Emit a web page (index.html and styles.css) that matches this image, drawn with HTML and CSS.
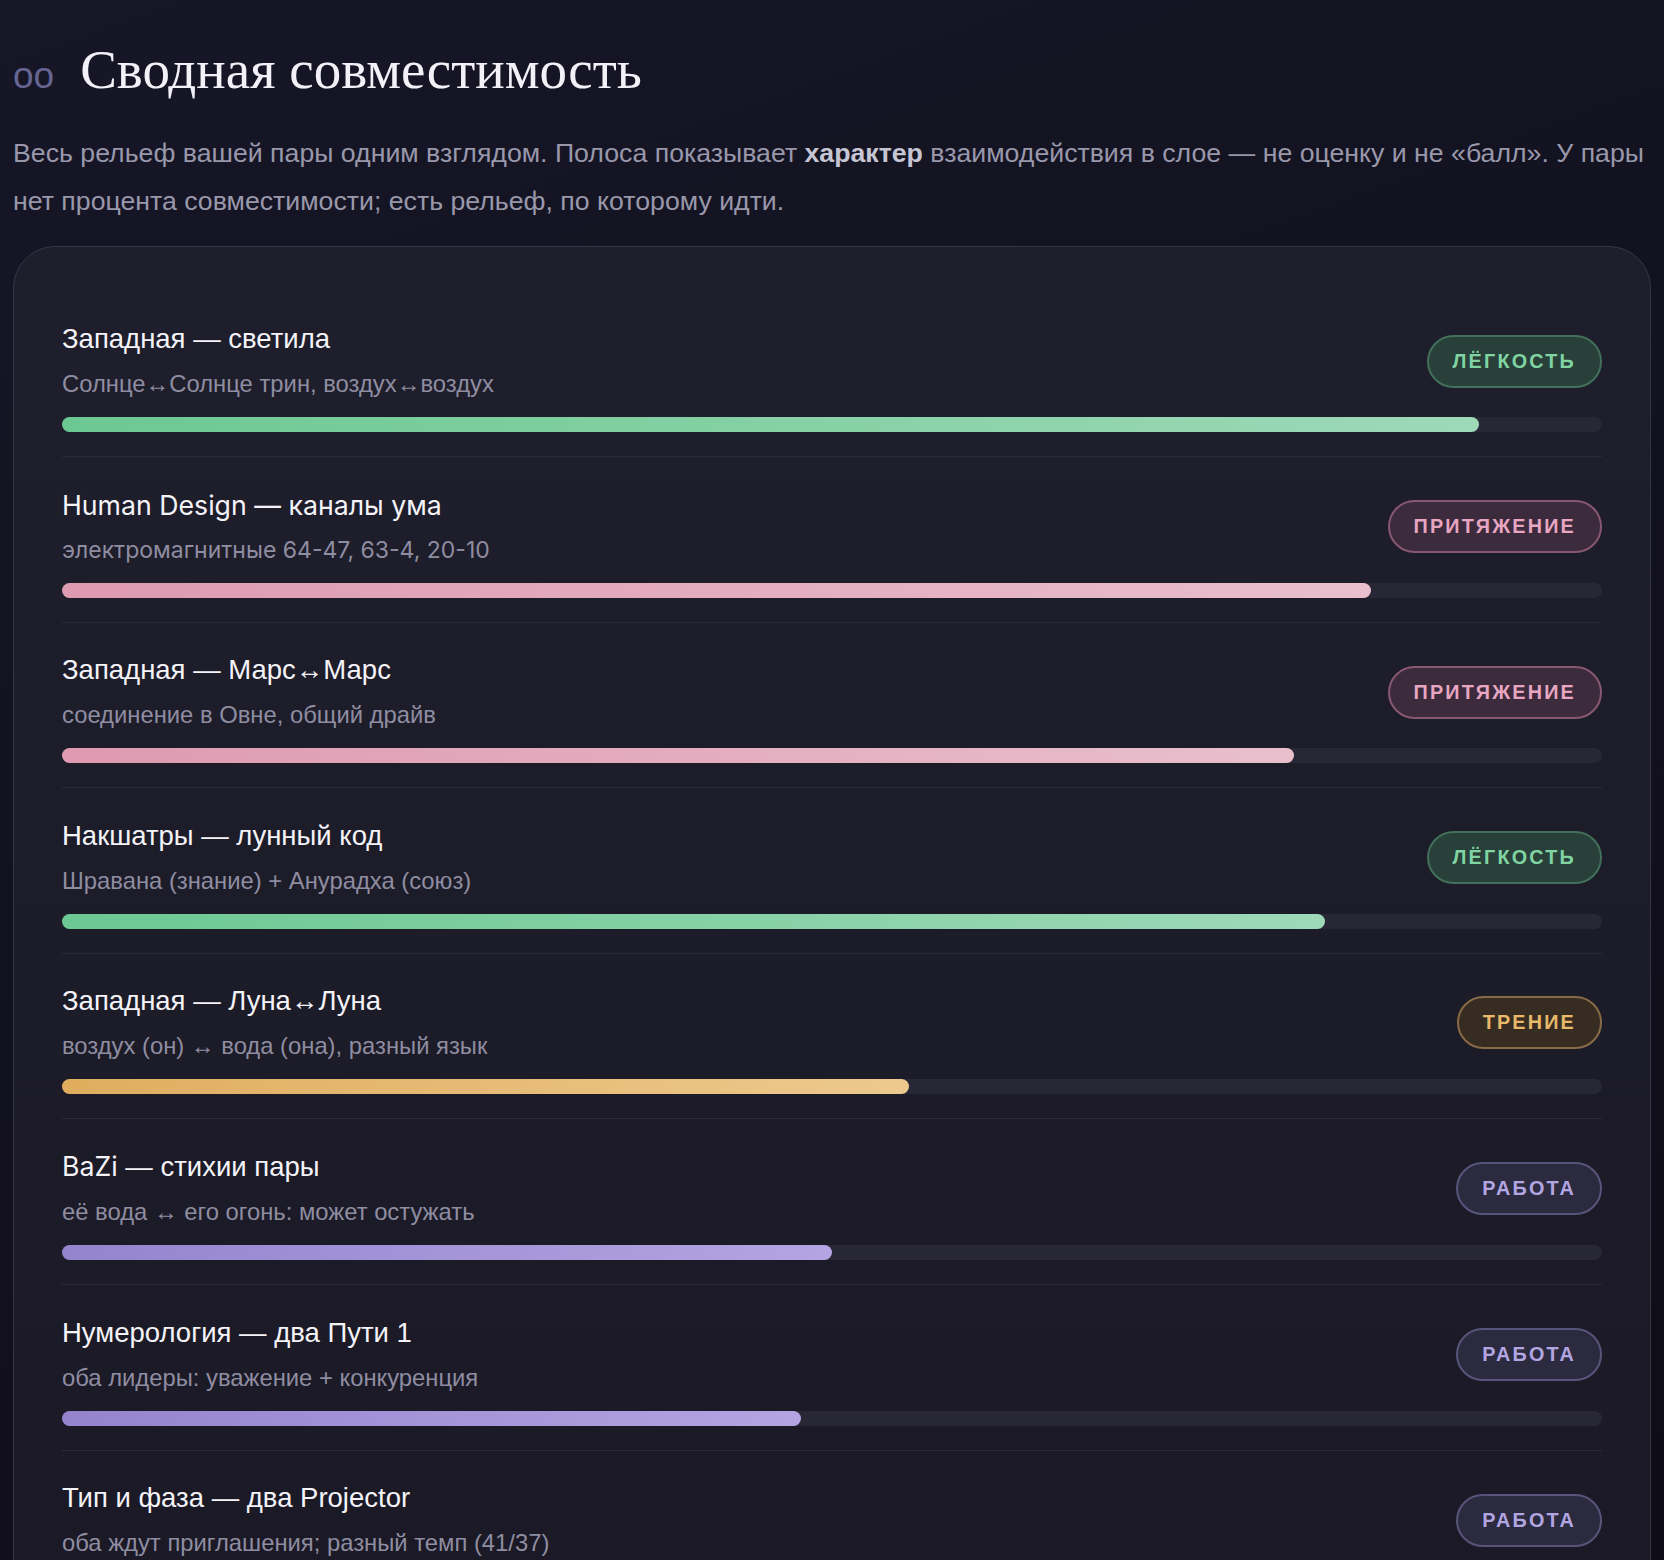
FILE: index.html
```html
<!DOCTYPE html>
<html lang="ru">
<head>
    <meta charset="UTF-8">
    <meta name="viewport" content="width=device-width, initial-scale=1.0">
    <title>Сводная совместимость</title>
    <link rel="stylesheet" href="styles.css">
</head>
<body>
    <div class="page">
        <h1 class="section-title"><span class="section-mark">oo</span>Сводная совместимость</h1>
        <p class="lead">Весь рельеф вашей пары одним взглядом. Полоса показывает <b>характер</b> взаимодействия в слое — не оценку и не «балл». У пары нет процента совместимости; есть рельеф, по которому идти.</p>

        <div class="card">
            <div class="layer">
                <div class="layer-head">
                    <div class="layer-text">
                        <div class="layer-name">Западная — светила</div>
                        <div class="layer-note">Солнце↔Солнце трин, воздух↔воздух</div>
                    </div>
                    <span class="tag tag-ease">Лёгкость</span>
                </div>
                <div class="track"><div class="fill fill-ease" style="width: 92%"></div></div>
            </div>

            <div class="layer layer-alt">
                <div class="layer-head">
                    <div class="layer-text">
                        <div class="layer-name">Human Design — каналы ума</div>
                        <div class="layer-note">электромагнитные 64-47, 63-4, 20-10</div>
                    </div>
                    <span class="tag tag-pull">Притяжение</span>
                </div>
                <div class="track"><div class="fill fill-pull" style="width: 85%"></div></div>
            </div>

            <div class="layer">
                <div class="layer-head">
                    <div class="layer-text">
                        <div class="layer-name">Западная — Марс↔Марс</div>
                        <div class="layer-note">соединение в Овне, общий драйв</div>
                    </div>
                    <span class="tag tag-pull">Притяжение</span>
                </div>
                <div class="track"><div class="fill fill-pull" style="width: 80%"></div></div>
            </div>

            <div class="layer">
                <div class="layer-head">
                    <div class="layer-text">
                        <div class="layer-name">Накшатры — лунный код</div>
                        <div class="layer-note">Шравана (знание) + Анурадха (союз)</div>
                    </div>
                    <span class="tag tag-ease">Лёгкость</span>
                </div>
                <div class="track"><div class="fill fill-ease" style="width: 82%"></div></div>
            </div>

            <div class="layer">
                <div class="layer-head">
                    <div class="layer-text">
                        <div class="layer-name">Западная — Луна↔Луна</div>
                        <div class="layer-note">воздух (он) ↔ вода (она), разный язык</div>
                    </div>
                    <span class="tag tag-friction">Трение</span>
                </div>
                <div class="track"><div class="fill fill-friction" style="width: 55%"></div></div>
            </div>

            <div class="layer">
                <div class="layer-head">
                    <div class="layer-text">
                        <div class="layer-name"><span class="latin">BaZi</span> — стихии пары</div>
                        <div class="layer-note">её вода ↔ его огонь: может остужать</div>
                    </div>
                    <span class="tag tag-work">Работа</span>
                </div>
                <div class="track"><div class="fill fill-work" style="width: 50%"></div></div>
            </div>

            <div class="layer">
                <div class="layer-head">
                    <div class="layer-text">
                        <div class="layer-name">Нумерология — два Пути 1</div>
                        <div class="layer-note">оба лидеры: уважение + конкуренция</div>
                    </div>
                    <span class="tag tag-work">Работа</span>
                </div>
                <div class="track"><div class="fill fill-work" style="width: 48%"></div></div>
            </div>

            <div class="layer">
                <div class="layer-head">
                    <div class="layer-text">
                        <div class="layer-name">Тип и фаза — два Projector</div>
                        <div class="layer-note">оба ждут приглашения; разный темп (41/37)</div>
                    </div>
                    <span class="tag tag-work">Работа</span>
                </div>
                <div class="track"><div class="fill fill-work" style="width: 45%"></div></div>
            </div>
        </div>
    </div>
</body>
</html>
```

FILE: styles.css
```css
body {
    margin: 0;
    min-height: 100vh;
    font-family: "Liberation Sans", Arial, sans-serif;
    color: #efeef5;
    background: linear-gradient(160deg, #171627 0%, #12111e 45%, #0d0c16 100%);
}
.page {
    padding: 36px 13px 40px;
}
.section-title {
    margin: 0;
    font-family: "Liberation Serif", "Times New Roman", serif;
    font-size: 55px;
    font-weight: normal;
    line-height: 67px;
    color: #f3f1f7;
}
.section-mark {
    font-family: "Liberation Sans", Arial, sans-serif;
    font-size: 37px;
    color: #666592;
    margin-right: 26px;
}
.lead {
    margin: 20px 0 21px;
    font-size: 26.7px;
    line-height: 48px;
    color: #9998ab;
}
.lead b {
    color: #c6c5d4;
}
.card {
    background: linear-gradient(180deg, #1f1e2c 0%, #1a1925 100%);
    border: 1.5px solid #363545;
    border-radius: 42px;
    padding: 45px 48px 40px;
}
.layer {
    padding: 31.4px 0 24px;
    border-bottom: 1px solid #2a2937;
}
.layer-head {
    display: flex;
    align-items: center;
    justify-content: space-between;
}
.layer-name {
    font-size: 27.5px;
    line-height: 32px;
    color: #f4f3f8;
}
.layer-note {
    margin-top: 14px;
    font-size: 23.8px;
    line-height: 30px;
    color: #8f8da1;
}
.layer-alt .layer-name,
.latin {
    font-family: Inter, "Noto Sans", sans-serif;
    font-size: 26.7px;
}
.layer-alt .layer-note {
    font-family: Inter, "Noto Sans", sans-serif;
    font-size: 23px;
}
.tag {
    padding: 13px 24px;
    border: 2px solid;
    border-radius: 30px;
    font-size: 19.8px;
    font-weight: bold;
    line-height: 23px;
    letter-spacing: 2.2px;
    text-transform: uppercase;
}
.tag-ease {
    color: #80d4a2;
    background: #293f3a;
    border-color: #42705a;
}
.tag-pull {
    color: #e8a6c1;
    background: #3c2b3d;
    border-color: #885870;
}
.tag-friction {
    color: #e8b96a;
    background: #362c22;
    border-color: #886a46;
}
.tag-work {
    color: #b2a6e2;
    background: #2c2a3e;
    border-color: #59547c;
}
.track {
    margin-top: 18px;
    height: 15px;
    border-radius: 8px;
    background: #282735;
}
.fill {
    height: 100%;
    border-radius: 8px;
}
.fill-ease {
    background: linear-gradient(90deg, #6cc892, #9ed9b8);
}
.fill-pull {
    background: linear-gradient(90deg, #de9ab0, #e9bfcd);
}
.fill-friction {
    background: linear-gradient(90deg, #e0ad5e, #edc98e);
}
.fill-work {
    background: linear-gradient(90deg, #9484ce, #b4a4e2);
}
```
